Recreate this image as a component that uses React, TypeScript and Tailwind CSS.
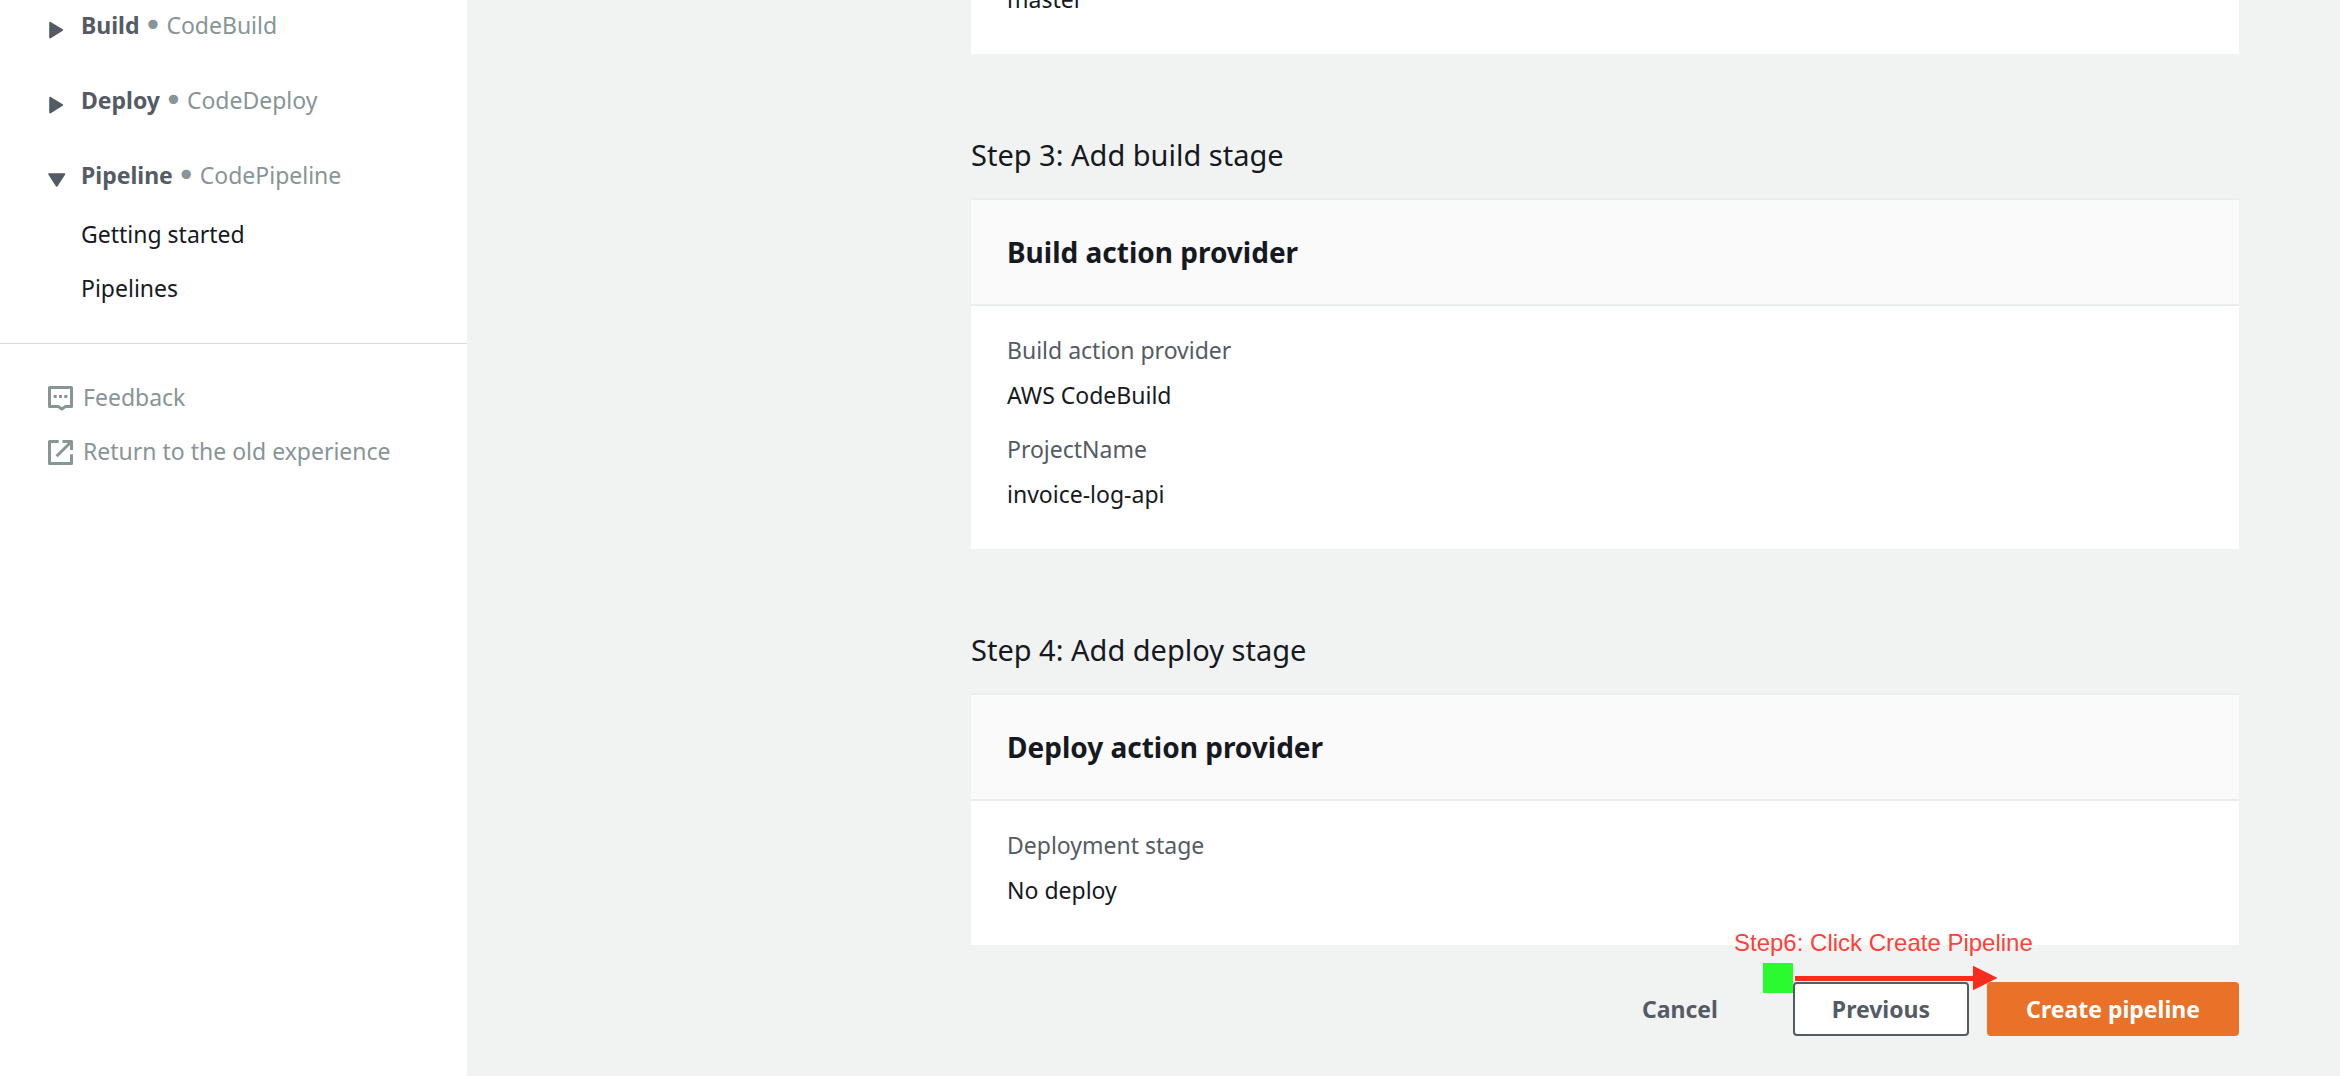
import React from "react";

type Service = { name: string; product: string; open?: boolean };

const services: Service[] = [
  { name: "Build", product: "CodeBuild" },
  { name: "Deploy", product: "CodeDeploy" },
  { name: "Pipeline", product: "CodePipeline", open: true },
];

function Caret({ open }: { open?: boolean }) {
  return (
    <svg
      viewBox="0 0 18 18"
      className="mt-[14px] mr-[15px] size-[18px] shrink-0"
      fill="currentColor"
      stroke="currentColor"
      strokeWidth="2"
      strokeLinejoin="round"
      aria-hidden="true"
    >
      {open ? <path d="M1.3 3.2h14.9L8.7 14.6z" /> : <path d="M2.2 1.8v14.6L14.2 9z" />}
    </svg>
  );
}

function ServiceToggle({ name, product, open }: Service) {
  return (
    <button type="button" aria-expanded={!!open} className="flex items-start text-left">
      <Caret open={open} />
      <span className="flex h-9 items-center gap-[4px]">
        <span className="font-bold">{name}</span>
        <span className="font-['DejaVu_Sans',sans-serif] text-[32px] leading-9 text-[#879596]">•</span>
        <span className="text-[#879596]">{product}</span>
      </span>
    </button>
  );
}

function FeedbackIcon() {
  return (
    <svg viewBox="0 0 25 25" className="mt-[7px] size-[25px] shrink-0" fill="none" stroke="currentColor" strokeWidth="3" strokeLinejoin="round" aria-hidden="true">
      <path d="M1.5 1.5h22v19h-6L13.8 23l-3.6-2.5H1.5z" />
      <path d="M5.7 10.5h3M11 10.5h3M16.3 10.5h3" />
    </svg>
  );
}

function ExternalIcon() {
  return (
    <svg viewBox="0 0 25 25" className="mt-[7px] size-[25px] shrink-0" fill="none" stroke="currentColor" strokeWidth="3" strokeLinejoin="round" aria-hidden="true">
      <path d="M10.7 1.5H1.5v22h22v-9.2M14.5 1.5h9V10M23 2L8.6 16.2" />
    </svg>
  );
}

function Sidebar() {
  return (
    <aside className="w-[467px] shrink-0 bg-white text-[#545b64]">
      <nav className="px-12 pt-[7px] pb-[37px]">
        <div className="flex flex-col items-start gap-[39px]">
          {services.map((s) => (
            <ServiceToggle key={s.name} {...s} />
          ))}
        </div>
        <ul className="mt-[23px] flex flex-col gap-[18px] pl-[33px] text-[#16191f]">
          <li><a href="#getting-started">Getting started</a></li>
          <li><a href="#pipelines">Pipelines</a></li>
        </ul>
      </nav>
      <div className="flex flex-col items-start gap-[18px] border-t border-[#d5dbdb] px-12 pt-[35px] text-[#879596]">
        <a href="#feedback" className="flex items-start gap-[10px]"><FeedbackIcon />Feedback</a>
        <a href="#old-experience" className="flex items-start gap-[10px]"><ExternalIcon />Return to the old experience</a>
      </div>
    </aside>
  );
}

function StepCard({ step, title, fields }: { step: string; title: string; fields: [string, string][] }) {
  return (
    <section className="mt-[79px]">
      <h2 className="mb-[21px] text-[29px] leading-[44px]">{step}</h2>
      <div className="border-t-2 border-[#eaeded] bg-white">
        <h3 className="border-b-2 border-[#eaeded] bg-[#fafafa] px-9 py-[30px] text-[28px] leading-[44px] font-bold">{title}</h3>
        <dl className="flex flex-col gap-[18px] px-9 pt-[26px] pb-[37px]">
          {fields.map(([label, value]) => (
            <div key={label} className="flex flex-col gap-[9px]">
              <dt className="text-[#545b64]">{label}</dt>
              <dd>{value}</dd>
            </div>
          ))}
        </dl>
      </div>
    </section>
  );
}

function Callout() {
  return (
    <div className="pointer-events-none absolute right-[206px] bottom-full -mb-[11px] w-[299px] font-['Liberation_Sans',Arial,sans-serif] text-[24px] leading-7 font-normal whitespace-nowrap text-[#ff3f38]">
      <p>Step6: Click Create Pipeline</p>
      <svg viewBox="0 0 235 30" className="mt-[6px] ml-[29px] h-[30px] w-[235px]" aria-hidden="true">
        <rect width="30" height="30" fill="#29fb2f" />
        <path d="M32 13h178V2.7L234.6 15 210 27.3V18H32z" fill="#fd2b1b" />
      </svg>
    </div>
  );
}

export default function App() {
  return (
    <div className="flex min-h-screen bg-[#f1f3f3] font-['Noto_Sans',sans-serif] text-[23px] leading-9 text-[#16191f]">
      <Sidebar />
      <main className="min-w-0 flex-1 overflow-hidden pr-[101px] pb-10 pl-[504px]">
        <div className="-mt-[19px] bg-white px-9 pb-[37px]">master</div>
        <StepCard
          step="Step 3: Add build stage"
          title="Build action provider"
          fields={[["Build action provider", "AWS CodeBuild"], ["ProjectName", "invoice-log-api"]]}
        />
        <StepCard step="Step 4: Add deploy stage" title="Deploy action provider" fields={[["Deployment stage", "No deploy"]]} />
        <div className="relative mt-[37px] flex justify-end gap-[18px] font-bold whitespace-nowrap">
          <button type="button" className="mr-[18px] rounded border-2 border-transparent px-[37px] py-[7px] text-[#545b64]">Cancel</button>
          <button type="button" className="rounded border-2 border-[#545b64] bg-white px-[37px] py-[7px] text-[#545b64]">Previous</button>
          <button type="button" className="rounded border-2 border-[#e97228] bg-[#e97228] px-[37px] py-[7px] text-white">Create pipeline</button>
          <Callout />
        </div>
      </main>
    </div>
  );
}
